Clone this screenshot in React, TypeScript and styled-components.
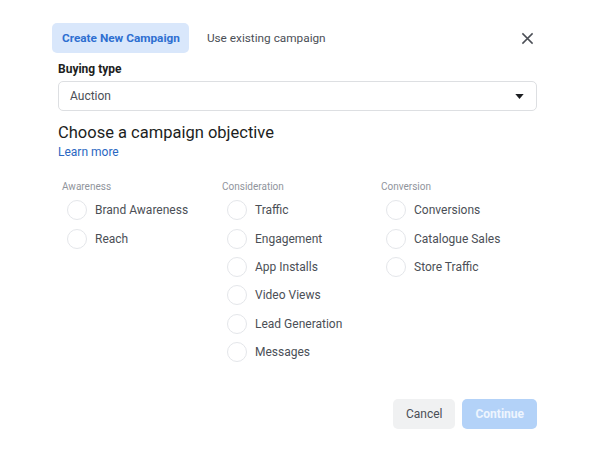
import styled, { createGlobalStyle } from 'styled-components';
import { useState } from 'react';

const Global = createGlobalStyle`
  body {
    margin: 0;
    background: #ffffff;
    font-family: Roboto, 'Liberation Sans', Arial, sans-serif;
    color: #444950;
  }
`;

const columns = [
  { title: 'Awareness', items: ['Brand Awareness', 'Reach'] },
  {
    title: 'Consideration',
    items: ['Traffic', 'Engagement', 'App Installs', 'Video Views', 'Lead Generation', 'Messages'],
  },
  { title: 'Conversion', items: ['Conversions', 'Catalogue Sales', 'Store Traffic'] },
];

function App() {
  const [tab, setTab] = useState('new');
  const [picked, setPicked] = useState('');

  return (
    <>
      <Global />
      <Dialog>
        <TabBar>
          <Tab $active={tab === 'new'} onClick={() => setTab('new')}>
            Create New Campaign
          </Tab>
          <Tab $active={tab === 'existing'} onClick={() => setTab('existing')}>
            Use existing campaign
          </Tab>
          <Close aria-label='Close'>
            <svg width='13' height='13' viewBox='0 0 14 14'>
              <path d='M1.5 1.5 L12.5 12.5 M12.5 1.5 L1.5 12.5' stroke='#4b4f56' strokeWidth='1.6' />
            </svg>
          </Close>
        </TabBar>

        <FieldLabel>Buying type</FieldLabel>
        <Select>
          <span>Auction</span>
          <svg width='9' height='5' viewBox='0 0 10 6'>
            <path d='M0 0 H10 L5 6 Z' fill='#1c1e21' />
          </svg>
        </Select>

        <Heading>Choose a campaign objective</Heading>
        <LearnMore href='#'>Learn more</LearnMore>

        <Objectives>
          {columns.map((col) => (
            <Column key={col.title}>
              <ColumnTitle>{col.title}</ColumnTitle>
              {col.items.map((item) => (
                <Option key={item} onClick={() => setPicked(item)}>
                  <Radio $checked={picked === item} />
                  {item}
                </Option>
              ))}
            </Column>
          ))}
        </Objectives>

        <Footer>
          <Button>Cancel</Button>
          <Button $primary disabled={!picked}>
            Continue
          </Button>
        </Footer>
      </Dialog>
    </>
  );
}

const Dialog = styled.div`
  width: 479px;
  padding: 23px 0 0 58px;
  display: flex;
  flex-direction: column;
`;

const TabBar = styled.div`
  display: flex;
  align-items: center;
  gap: 8px;
  margin-left: -6px;
  height: 30px;
`;

const Tab = styled.button<{ $active?: boolean }>`
  height: 30px;
  padding: 0 9px 0 10px;
  border: none;
  border-radius: 5px;
  font-family: inherit;
  font-size: 11.8px;
  font-weight: ${(p) => (p.$active ? 700 : 400)};
  color: ${(p) => (p.$active ? '#2e6fd1' : '#4b4f56')};
  background: ${(p) => (p.$active ? '#d9e7fb' : 'transparent')};
  cursor: pointer;
`;

const Close = styled.button`
  margin-left: auto;
  margin-right: 3px;
  border: none;
  background: none;
  padding: 0;
  display: flex;
  cursor: pointer;
`;

const FieldLabel = styled.div`
  margin-top: 8px;
  font-size: 12px;
  font-weight: 700;
  color: #1c1e21;
  line-height: 16px;
`;

const Select = styled.div`
  margin-top: 4px;
  height: 28px;
  border: 1px solid #dddfe2;
  border-radius: 5px;
  display: flex;
  align-items: center;
  justify-content: space-between;
  padding: 0 12px 0 11px;
  font-size: 12px;
  color: #4b4f56;
`;

const Heading = styled.div`
  margin-top: 12px;
  font-size: 16.5px;
  color: #1c1e21;
  line-height: 20px;
`;

const LearnMore = styled.a`
  font-size: 12px;
  color: #2a67c2;
  text-decoration: none;
  line-height: 18px;
`;

const Objectives = styled.div`
  margin-top: 19px;
  display: grid;
  grid-template-columns: 160px 159px 150px;
  padding-left: 4px;
`;

const Column = styled.div`
  display: flex;
  flex-direction: column;
`;

const ColumnTitle = styled.div`
  font-size: 10px;
  color: #90949c;
  line-height: 14px;
  margin-bottom: 2px;
`;

const Option = styled.label`
  display: flex;
  align-items: center;
  gap: 8px;
  height: 28.4px;
  padding-left: 5px;
  font-size: 12px;
  color: #4b4f56;
  cursor: pointer;
`;

const Radio = styled.span<{ $checked?: boolean }>`
  width: 20px;
  height: 20px;
  border-radius: 50%;
  border: 1px solid #e4e6ea;
  box-sizing: border-box;
  background: ${(p) => (p.$checked ? '#1877f2' : '#fff')};
  box-shadow: ${(p) => (p.$checked ? 'inset 0 0 0 4px #fff' : 'none')};
`;

const Footer = styled.div`
  margin-top: 33px;
  display: flex;
  justify-content: flex-end;
  gap: 7px;
`;

const Button = styled.button<{ $primary?: boolean }>`
  height: 30px;
  padding: 0 13px;
  border: none;
  border-radius: 5px;
  font-family: inherit;
  font-size: 12px;
  font-weight: ${(p) => (p.$primary ? 700 : 400)};
  color: ${(p) => (p.$primary ? '#eef5fe' : '#4b4f56')};
  background: ${(p) => (p.$primary ? '#b3d2f8' : '#f0f1f2')};
  cursor: pointer;
`;

export default App;
